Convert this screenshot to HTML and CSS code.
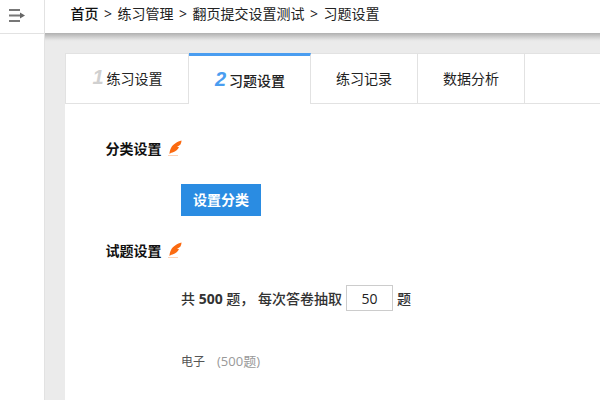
FILE: index.html
```html
<!DOCTYPE html>
<html lang="zh-CN">
<head>
<meta charset="utf-8">
<title>习题设置</title>
<link rel="stylesheet" href="styles.css">
</head>
<body>
<div class="app">
  <aside class="sidebar">
    <div class="toggle">
      <svg width="16" height="13" viewBox="0 0 16 13"><path d="M0 1h11M0 6.500h11M0 12h11" stroke="#777" stroke-width="2" fill="none"/><path d="M11 3.500l5 3-5 3z" fill="#666"/></svg>
    </div>
  </aside>
  <div class="main">
    <header class="crumbs"><b>首页</b><i>&gt;</i>练习管理<i>&gt;</i>翻页提交设置测试<i>&gt;</i>习题设置</header>
    <div class="content">
      <section class="card">
        <nav class="tabs">
          <a class="tab first"><em>1</em>练习设置</a>
          <a class="tab active"><em>2</em>习题设置</a>
          <a class="tab plain">练习记录</a>
          <a class="tab plain">数据分析</a>
          <span class="tab-rest"></span>
        </nav>
        <div class="body">
          <h3 class="heading">分类设置<svg class="quill" width="14" height="17" viewBox="0 0 14 17"><path d="M13.500 0.500C9.500 1.500 5 4 3 8 2.200 9.800 1.500 11.500 1.500 14 2.500 13 3 13 4.500 12.500 8 11.500 10 9.500 11 7L9 7 12.300 4.800C13 3.500 13.500 2 13.500 0.500z" fill="#fb6a10"/><path d="M0.500 15.500h10" stroke="#fba46c" stroke-dasharray="1 1"/></svg></h3>
          <div class="btn-row"><button class="btn">设置分类</button></div>
          <h3 class="heading second">试题设置<svg class="quill" width="14" height="17" viewBox="0 0 14 17"><path d="M13.500 0.500C9.500 1.500 5 4 3 8 2.200 9.800 1.500 11.500 1.500 14 2.500 13 3 13 4.500 12.500 8 11.500 10 9.500 11 7L9 7 12.300 4.800C13 3.500 13.500 2 13.500 0.500z" fill="#fb6a10"/><path d="M0.500 15.500h10" stroke="#fba46c" stroke-dasharray="1 1"/></svg></h3>
          <div class="count"><span>共 <b>500</b> 题， 每次答卷抽取</span><input class="num" value="50"><span>题</span></div>
          <div class="cat">电子<span class="total">(500题)</span></div>
        </div>
      </section>
    </div>
  </div>
</div>
</body>
</html>
```
FILE: styles.css
```css
* { box-sizing: border-box; }
html, body { margin: 0; height: 100%; overflow: hidden; }
body { font-family: "Open Sans", "Noto Sans CJK SC", sans-serif; font-size: 14px; color: #222; background: #fff; }
.app { display: flex; height: 400px; }
.sidebar { width: 45px; flex: none; background: #fff; border-right: 1px solid #e2e2e2; }
.toggle { height: 34px; display: flex; align-items: center; padding: 0 0 3px 9px; border-bottom: 1px solid #e2e2e2; }
.main { flex: 1; min-width: 0; display: flex; flex-direction: column; background: #ebebeb; }
.crumbs { height: 33px; flex: none; padding: 0 0 7px 25.500px; display: flex; align-items: center; background: #fff; font-size: 14px; color: #222; }
.crumbs b { color: #111; font-weight: 500; }
.crumbs i { font-style: normal; margin: 0 5.500px; }
.content { flex: 1; padding: 20px 0 0 20px; min-height: 0; background: linear-gradient(#b0b0b0, #e6e6e6 7px, #ebebeb 9px) no-repeat; }
.card { background: #fff; height: 100%; }
.tabs { display: flex; height: 51px; }
.tab { width: 107px; display: flex; align-items: center; justify-content: center; font-size: 14px; color: #222; border: 1px solid #e2e2e2; border-left: 0; padding-bottom: 2px; }
.tab.first { width: 124px; border-left: 1px solid #e2e2e2; padding-left: 1px; }
.tab em { font: italic bold 20px "Liberation Sans", sans-serif; margin-right: 3px; color: #d0d0d0; }
.tab.active { width: 122px; border-top: 3px solid #4a9df0; border-bottom: 0; padding: 0 0 1px 1px; font-weight: 500; }
.tab.active em { color: #4a9df0; }
.tab-rest { flex: 1; border-top: 1px solid #e2e2e2; border-bottom: 1px solid #e2e2e2; }
.body { padding: 34px 0 0 40.500px; }
.heading { margin: 0; font-size: 14px; font-weight: 700; color: #111; height: 20px; display: flex; align-items: center; }
.quill { margin: 1px 0 0 6.500px; }
.btn-row { margin: 26px 0 0 75.500px; }
.btn { width: 80px; height: 32px; padding: 0 0 2px; border: 0; background: #2a8ce2; color: #fff; font: 700 14px "Noto Sans CJK SC", sans-serif; display: block; }
.second { margin-top: 24px; }
.count { margin: 25px 0 0 75.500px; display: flex; align-items: center; font-weight: 500; color: #333; height: 26px; }
.count span { white-space: pre; }
.count b { font-weight: 700; }
.num { width: 47px; height: 26px; margin: 0 4px; border: 1px solid #ccc; background: #fff; text-align: center; font: 14px "Open Sans", sans-serif; color: #222; padding: 0; }
.cat { margin: 40px 0 0 75.500px; font-size: 12px; color: #555; }
.total { color: #999; margin-left: 12px; font-size: 13px; }
```
